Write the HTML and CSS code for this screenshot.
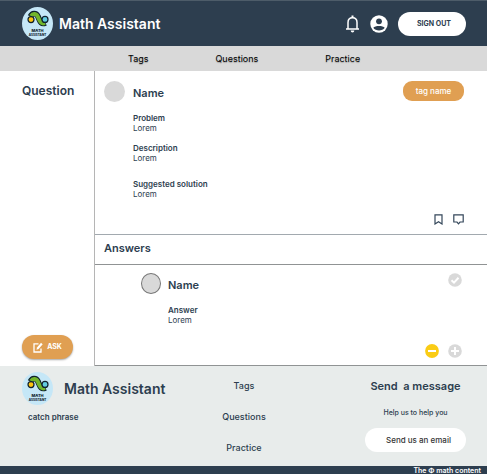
FILE: index.html
```
<!DOCTYPE html>
<html lang="en">
<head>
<meta charset="utf-8">
<meta name="viewport" content="width=device-width, initial-scale=1">
<title>Math Assistant</title>
<link rel="stylesheet" href="styles.css">
</head>
<body>
<header class="header">
  <a class="brand" href="#">
    <svg class="logo" viewBox="0 0 31 33">
      <g id="logo">
        <ellipse cx="15.5" cy="16.5" rx="15.5" ry="16.5" fill="#c5e7f7"/>
        <path d="M8.500 9.500C10 6 14 5.500 16 9.500C18 14 19 18 23.500 15.800" fill="none" stroke="#10222e" stroke-width="5.800"/>
        <path d="M9 9C11 6 14.500 6.500 16 10C17.800 14.500 19 17.500 23 16" fill="none" stroke="#72b52b" stroke-width="4"/>
        <circle cx="9" cy="12.600" r="3" fill="#fcc310" stroke="#10222e" stroke-width="1.200"/>
        <circle cx="23" cy="12.400" r="3" fill="#62cbe0" stroke="#10222e" stroke-width="1.200"/>
        <text x="15.500" y="25" class="logo-math">MATH</text>
        <text x="15.500" y="29" class="logo-assistant">ASSISTANT</text>
      </g>
    </svg>
    <span class="brand-name">Math Assistant</span>
  </a>
  <div class="account">
    <button class="icon-button" aria-label="Notifications">
      <svg width="15" height="18" viewBox="0 0 15 18" fill="none" stroke="#fff" stroke-width="1.500">
        <path d="M1 14H14M3 14V7.500C3 4.500 5 2.700 7.500 2.700S12 4.500 12 7.500V14"/>
        <path d="M7.500 .5V3" stroke-width="2"/>
        <path d="M5.700 15.500H9.300C9.300 18 5.700 18 5.700 15.500Z" fill="#fff" stroke="none"/>
      </svg>
    </button>
    <button class="icon-button" aria-label="Profile">
      <svg width="18" height="18" viewBox="0 0 18 18">
        <circle cx="9" cy="9" r="8.700" fill="#fff"/>
        <circle cx="9" cy="6.300" r="2.900" fill="#2d3e4f"/>
        <path d="M3.300 12.700C5 10.300 13 10.300 14.700 12.700C12.500 16.300 5.500 16.300 3.300 12.700Z" fill="#2d3e4f"/>
      </svg>
    </button>
    <button class="pill sign-out">SIGN OUT</button>
  </div>
</header>

<nav class="nav">
  <a href="#">Tags</a>
  <a href="#">Questions</a>
  <a href="#">Practice</a>
</nav>

<main class="main">
  <aside class="sidebar">
    <h1 class="page-title">Question</h1>
    <button class="ask">
      <svg width="10" height="11" viewBox="0 0 10 11" fill="none" stroke="#fff">
        <path d="M5.500 1.800H1V10H8V6.500" stroke-width="1.300"/>
        <path d="M3.500 7.700L4 5.500L8 .8L9.700 2.300L5.600 7Z" fill="#fff" stroke="none"/>
      </svg>
      <span>ASK</span>
    </button>
  </aside>

  <div class="thread">
    <article class="post question">
      <div class="avatar"></div>
      <div class="post-body">
        <h2 class="author">Name</h2>
        <section class="field"><h3>Problem</h3><p>Lorem</p></section>
        <section class="field wide"><h3>Description</h3><p>Lorem</p></section>
        <section class="field"><h3>Suggested solution</h3><p>Lorem</p></section>
      </div>
      <div class="post-side">
        <a class="tag" href="#">tag name</a>
        <div class="actions">
          <button class="icon-button" aria-label="Bookmark">
            <svg width="9" height="11" viewBox="0 0 9 11" fill="none" stroke="#34475a" stroke-width="1.200"><path d="M1 .8H8V10L4.500 7.800L1 10Z"/></svg>
          </button>
          <button class="icon-button" aria-label="Comment">
            <svg width="11" height="11" viewBox="0 0 11 11" fill="none" stroke="#34475a" stroke-width="1.200"><path d="M.8 .8H10.200V8H7L5.500 9.800L4 8H.8Z"/></svg>
          </button>
        </div>
      </div>
    </article>

    <h2 class="answers-title">Answers</h2>

    <article class="post answer">
      <div class="avatar outlined"></div>
      <div class="post-body">
        <h2 class="author">Name</h2>
        <section class="field"><h3>Answer</h3><p>Lorem</p></section>
      </div>
      <div class="post-side">
        <button class="icon-button" aria-label="Accept answer">
          <svg width="14" height="14" viewBox="0 0 14 14"><circle cx="7" cy="7" r="6.800" fill="#d9d9d9"/><path d="M3.500 7.200L6 9.600L10.500 4.800" fill="none" stroke="#fff" stroke-width="2"/></svg>
        </button>
        <div class="actions votes">
          <button class="icon-button" aria-label="Vote down">
            <svg width="14" height="14" viewBox="0 0 14 14"><circle cx="7" cy="7" r="6.900" fill="#facc15"/><path d="M3 7H11" stroke="#fff" stroke-width="2"/></svg>
          </button>
          <button class="icon-button" aria-label="Vote up">
            <svg width="14" height="14" viewBox="0 0 14 14"><circle cx="7" cy="7" r="6.800" fill="#d9d9d9"/><path d="M3 7H11M7 3V11" stroke="#fff" stroke-width="2"/></svg>
          </button>
        </div>
      </div>
    </article>
  </div>
</main>

<footer class="footer">
  <div class="footer-about">
    <a class="brand" href="#">
      <svg class="logo" viewBox="0 0 31 33"><use href="#logo"/></svg>
      <span class="brand-name">Math Assistant</span>
    </a>
    <p class="catch">catch phrase</p>
  </div>
  <nav class="footer-links">
    <a href="#">Tags</a>
    <a href="#">Questions</a>
    <a href="#">Practice</a>
  </nav>
  <div class="contact">
    <h2>Send&nbsp; a message</h2>
    <p>Help us to help you</p>
    <button class="pill email">Send us an email</button>
  </div>
</footer>
<div class="legal">The Φ math content</div>
</body>
</html>
```
FILE: styles.css
```
* { box-sizing: border-box; }

body {
  margin: 0;
  min-height: 100vh;
  display: flex;
  flex-direction: column;
  overflow-x: hidden;
  background: #fff;
  color: #2d3e4f;
  font-family: Inter, "Liberation Sans", sans-serif;
  font-size: 8px;
  line-height: 10px;
}

h1, h2, h3, p { margin: 0; font-weight: 600; }
h3 { font-size: 8px; }
a { color: inherit; text-decoration: none; }
button { font: inherit; color: inherit; border: 0; padding: 0; background: none; cursor: pointer; }
svg { display: block; }

.logo { width: 31px; height: 33px; }
.logo-math, .logo-assistant { font-weight: 800; text-anchor: middle; fill: #10222e; }
.logo-math { font-size: 4px; }
.logo-assistant { font-size: 3px; }

.header {
  display: flex;
  align-items: center;
  justify-content: space-between;
  height: 46px;
  padding: 0 21px 0 22px;
  border-top: 1px solid #4d5c69;
  background: #2d3e4f;
  color: #fff;
}
.brand { display: flex; align-items: center; gap: 6px; }
.brand-name { font-size: 14px; line-height: 18px; font-weight: 600; }
.account { display: flex; align-items: center; gap: 10px; }

.pill { height: 24px; border-radius: 12px; background: #fff; }
.sign-out { width: 68px; padding-left: 4px; color: #2d3e4f; font-size: 7px; font-weight: 700; }

.nav {
  display: flex;
  align-items: center;
  gap: 67px;
  height: 25px;
  padding-left: 128px;
  background: #d9d9d9;
  color: #000;
  font-size: 9px;
  font-weight: 400;
  text-shadow: 0 1px 1px rgba(0, 0, 0, .25);
}

.main { display: flex; flex: 1; }
.sidebar {
  display: flex;
  flex-direction: column;
  align-items: flex-start;
  justify-content: space-between;
  flex: 0 0 95px;
  padding: 12px 0 7px 22px;
  border-right: 1px solid #b5b5b5;
}
.page-title { font-size: 12px; line-height: 16px; }
.ask {
  display: flex;
  align-items: center;
  justify-content: center;
  gap: 4px;
  width: 51px;
  height: 24px;
  border-radius: 12px;
  background: #e09f52;
  box-shadow: 0 1px 2px rgba(0, 0, 0, .35);
  color: #fff;
  font-size: 7px;
  font-weight: 700;
}

.thread { flex: 1; display: flex; flex-direction: column; }
.post { display: flex; gap: 8px; }
.question { padding: 10px 23px 9px 9px; border-bottom: 1px solid #a2a9af; }
.answer { flex: 1; padding: 8px 25px 7px 46px; gap: 7px; border-bottom: 1px solid #909394; }
.avatar { flex: none; width: 21px; height: 21px; border-radius: 50%; background: #d9d9d9; }
.outlined { width: 20px; border: 1px solid #777; }
.post-body { flex: 1; }
.author { padding-top: 5px; margin-bottom: 12px; font-size: 11px; line-height: 15px; }
.field { margin-bottom: 10px; }
.wide { margin-bottom: 16px; }
.field p { font-weight: 400; }
.post-side { display: flex; flex-direction: column; align-items: flex-end; justify-content: space-between; }
.tag {
  width: 61px;
  padding: 5px 0;
  border-radius: 9px;
  background: #e09f52;
  color: #fff;
  font-size: 8px;
  font-weight: 500;
  text-align: center;
}
.actions { display: flex; gap: 10px; padding-top: 8px; }
.question .post-side { min-height: 144px; }
.votes { gap: 9px; }
.answers-title { padding: 6px 9px 8px; border-bottom: 1px solid #909394; font-size: 11px; line-height: 15px; }

.footer {
  display: grid;
  grid-template-columns: 1fr auto 1fr;
  height: 100px;
  padding: 6px 21px 14px 22px;
  background: #e8eceb;
}
.footer .brand { gap: 11px; }
.catch { padding: 7px 6px; }
.footer-links {
  display: flex;
  flex-direction: column;
  align-items: center;
  gap: 21px;
  padding-top: 9px;
  font-size: 9px;
  font-weight: 500;
}
.contact { justify-self: end; width: 101px; text-align: center; }
.contact h2 { padding-top: 7px; font-size: 11px; line-height: 15px; white-space: nowrap; }
.contact p { margin: 14px 0 10px; font-size: 7px; font-weight: 500; }
.email { width: 100%; padding-left: 6px; color: #333; font-weight: 500; }
.legal {
  height: 8px;
  padding-right: 6px;
  background: #2d3e4f;
  color: #fff;
  font-size: 7px;
  font-weight: 600;
  text-align: right;
  overflow: hidden;
}
```
